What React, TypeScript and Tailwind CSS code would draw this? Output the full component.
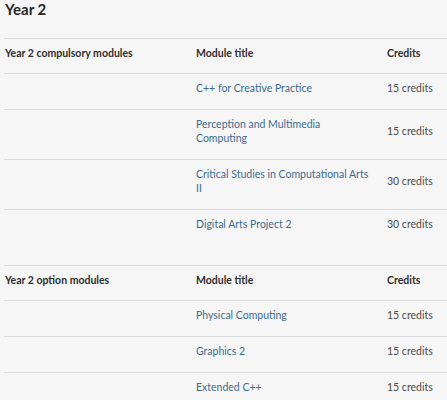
type Module = { title: string[]; credits: string };

const compulsory: Module[] = [
  { title: ["C++ for Creative Practice"], credits: "15 credits" },
  { title: ["Perception and Multimedia", "Computing"], credits: "15 credits" },
  { title: ["Critical Studies in Computational Arts", "II"], credits: "30 credits" },
  { title: ["Digital Arts Project 2"], credits: "30 credits" },
];

const options: Module[] = [
  { title: ["Physical Computing"], credits: "15 credits" },
  { title: ["Graphics 2"], credits: "15 credits" },
  { title: ["Extended C++"], credits: "15 credits" },
];

function ModuleTable({ heading, rows }: { heading: string; rows: Module[] }) {
  return (
    <div className="ml-[4px]">
      <div className="grid grid-cols-[191px_191px_1fr] border-t border-[#dcdcdc] text-[10.5px] leading-[14px] font-bold text-[#2e2e2e]">
        <div className="pl-px pt-[7px] pb-[13px]">{heading}</div>
        <div className="pl-px pt-[7px] pb-[13px]">Module title</div>
        <div className="pl-px pt-[7px] pb-[13px]">Credits</div>
      </div>
      {rows.map((m) => (
        <div
          key={m.title.join(" ")}
          className="grid grid-cols-[191px_191px_1fr] items-center border-t border-[#dcdcdc] text-[10.5px] leading-[14px]"
        >
          <div />
          <a href="#" className="pl-px pt-[7px] pb-[14px] text-[#3e6b93]">
            {m.title.map((line, i) => (
              <span key={i} className="block">
                {line}
              </span>
            ))}
          </a>
          <div className="pl-px pt-[7px] pb-[14px] text-[#4d4d4d]">{m.credits}</div>
        </div>
      ))}
    </div>
  );
}

export default function App() {
  return (
    <div className="min-h-screen bg-[#f6f6f6] font-['Lato',sans-serif] overflow-hidden">
      <h2 className="px-[5px] text-[15px] leading-[18px] font-bold text-[#262626]">Year 2</h2>
      <div className="mt-[20px]">
        <ModuleTable heading="Year 2 compulsory modules" rows={compulsory} />
      </div>
      <div className="mt-[20px]">
        <ModuleTable heading="Year 2 option modules" rows={options} />
      </div>
    </div>
  );
}
